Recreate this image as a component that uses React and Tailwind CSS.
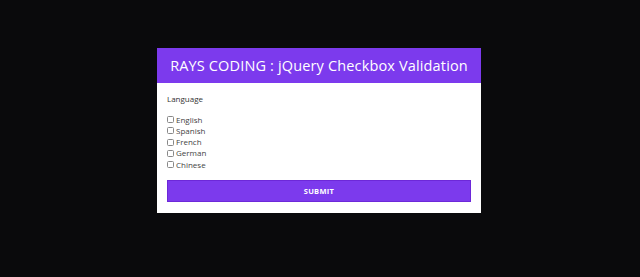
export default function App() {
  const langs = ["English", "Spanish", "French", "German", "Chinese"];
  return (
    <div className="w-[640px] h-[277px] bg-[#0a0a0c] flex justify-center pt-[48px] pr-[2px]" style={{ fontFamily: '"Open Sans", "Noto Sans", sans-serif' }}>
      <div className="w-[324px] h-[165px] bg-white flex flex-col">
        <div className="h-[35px] bg-[#7c3aed] flex items-center justify-center text-white text-[14.5px] tracking-[0.15px]">
          RAYS CODING : jQuery Checkbox Validation
        </div>
        <div className="px-[10px] pt-[11px] flex flex-col">
          <div className="text-[8px] leading-[10px] text-[#333]">Language</div>
          <div className="mt-[10px] flex flex-col">
            {langs.map((l) => (
              <label key={l} className="flex items-center h-[11.25px] text-[8px] text-[#444]">
                <span className="w-[7px] h-[7px] border border-[#888] rounded-[1.5px] mr-[2px] bg-white"></span>
                {l}
              </label>
            ))}
          </div>
          <button className="mt-[10px] h-[22px] w-full bg-[#7c3aed] border border-[#6d28d9] text-white text-[7.5px] font-bold tracking-[0.3px]">
            SUBMIT
          </button>
        </div>
      </div>
    </div>
  );
}
